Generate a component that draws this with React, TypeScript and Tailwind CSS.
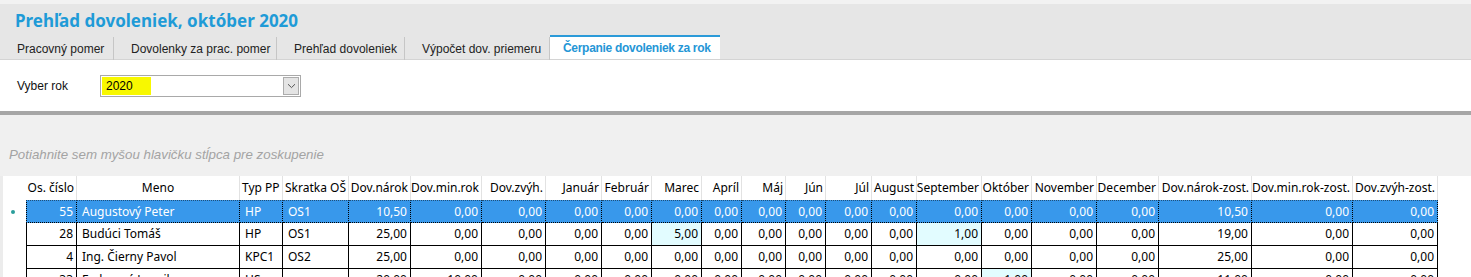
import * as React from 'react';

const cols = 'grid grid-cols-[26px_51px_163px_43px_66px_62px_71px_64px_56px_50px_50px_40px_44px_40px_46px_45px_65px_50px_65px_62px_93px_101px_85px]';

const headers: { label: string; align: 'l' | 'r' | 'c' }[] = [
  { label: 'Os. číslo', align: 'r' },
  { label: 'Meno', align: 'c' },
  { label: 'Typ PP', align: 'l' },
  { label: 'Skratka OŠ', align: 'l' },
  { label: 'Dov.nárok', align: 'r' },
  { label: 'Dov.min.rok', align: 'r' },
  { label: 'Dov.zvýh.', align: 'r' },
  { label: 'Január', align: 'r' },
  { label: 'Február', align: 'r' },
  { label: 'Marec', align: 'r' },
  { label: 'Apríl', align: 'r' },
  { label: 'Máj', align: 'r' },
  { label: 'Jún', align: 'r' },
  { label: 'Júl', align: 'r' },
  { label: 'August', align: 'r' },
  { label: 'September', align: 'r' },
  { label: 'Október', align: 'r' },
  { label: 'November', align: 'r' },
  { label: 'December', align: 'r' },
  { label: 'Dov.nárok-zost.', align: 'r' },
  { label: 'Dov.min.rok-zost.', align: 'r' },
  { label: 'Dov.zvýh-zost.', align: 'r' },
];

interface Row {
  cells: string[];
  hi?: number[]; // indexes of light cyan cells
}

const z = '0,00';

const rows: Row[] = [
  { cells: ['55', 'Augustový Peter', 'HP', 'OS1', '10,50', z, z, z, z, z, z, z, z, z, z, z, z, z, z, '10,50', z, z] },
  { cells: ['28', 'Budúci Tomáš', 'HP', 'OS1', '25,00', z, z, z, z, '5,00', z, z, z, z, z, '1,00', z, z, z, '19,00', z, z], hi: [9, 15] },
  { cells: ['4', 'Ing. Čierny Pavol', 'KPC1', 'OS2', '25,00', z, z, z, z, z, z, z, z, z, z, z, z, z, z, '25,00', z, z] },
  { cells: ['33', 'Fedorová Jarmila', 'HS', '', '20,00', '10,00', z, z, z, z, z, z, z, z, z, z, '1,00', z, z, '11,00', z, z], hi: [16] },
];

const tabs = [
  { label: 'Pracovný pomer', w: 'w-[114px]' },
  { label: 'Dovolenky za prac. pomer', w: 'w-[163px]' },
  { label: 'Prehľad dovoleniek', w: 'w-[128px]' },
  { label: 'Výpočet dov. priemeru', w: 'w-[145px]' },
];

export default function App() {
  return (
    <div className="w-[1471px] h-[277px] overflow-hidden bg-white font-['Liberation_Sans',sans-serif] text-[12px] text-black">
      <div className="h-[4px] bg-[#f2f2f2]" />
      {/* header + tabs */}
      <div className="h-[56px] bg-[#e6e6e6] border-b border-[#d4d4d4] flex flex-col">
        <div className="h-[32px] pl-[15px] pt-[5px] font-['Noto_Sans',sans-serif] font-bold text-[17px] leading-[23px] text-[#1f9bd7]">
          Prehľad dovoleniek, október 2020
        </div>
        <div className="flex h-[23px]">
          {tabs.map((t) => (
            <div key={t.label} className={`${t.w} h-full flex items-center pl-[17px] border-r border-[#c6c6c6] my-[1px] text-[#222]`}>
              {t.label}
            </div>
          ))}
          <div className="w-[170px] h-[24px] -mt-[1px] bg-white border-t-2 border-[#2b9ad8] pl-[13px] flex items-center font-bold text-[#2596d6] tracking-[-0.3px]">
            Čerpanie dovoleniek za rok
          </div>
        </div>
      </div>
      {/* filter panel */}
      <div className="h-[51px] flex items-center pl-[17px]">
        <span className="w-[83px] text-[#111]">Vyber rok</span>
        <div className="w-[201px] h-[22px] border border-[#a9a9a9] flex items-center p-[1px]">
          <span className="h-full w-[49px] bg-[#f8f800] pl-[4px] flex items-center">2020</span>
          <div className="flex-1" />
          <div className="w-[16px] h-[18px] bg-[#e4e4e4] border border-[#acacac] flex items-center justify-center">
            <svg width="9" height="6" viewBox="0 0 9 6">
              <path d="M1 1.2 L4.5 4.6 L8 1.2" fill="none" stroke="#555" strokeWidth="1" />
            </svg>
          </div>
        </div>
      </div>
      <div className="h-[4px] bg-[#a6a6a6]" />
      {/* group panel */}
      <div className="h-[61px] bg-[#f0f0f0] flex items-end pl-[9px] pb-[11px]">
        <span className="italic text-[13.3px] text-[#a3a3a3]">Potiahnite sem myšou hlavičku stĺpca pre zoskupenie</span>
      </div>
      {/* grid */}
      <div className="font-['Noto_Sans',sans-serif] text-[12px] border-l-[3px] border-[#ececec]">
        <div className={`${cols} h-[24px] -ml-[3px]`}>
          <div />
          {headers.map((h) => (
            <div
              key={h.label}
              className={`flex items-center px-[2px] border-r border-[#e2e2e2] whitespace-nowrap overflow-hidden ${h.align === 'r' ? 'justify-end' : h.align === 'c' ? 'justify-center' : 'justify-start'}`}
            >
              {h.label}
            </div>
          ))}
        </div>
        {rows.map((r, ri) => {
          const sel = ri === 0;
          return (
            <div key={ri} className={`${cols} h-[23px] -ml-[3px]`}>
              <div className="flex items-center justify-center">
                {sel && <span className="w-[4px] h-[4px] rounded-full bg-[#2a9d9b]" />}
              </div>
              {r.cells.map((c, ci) => {
                const left = ci >= 1 && ci <= 3;
                const hi = r.hi?.includes(ci);
                return (
                  <div
                    key={ci}
                    className={`flex items-center whitespace-nowrap overflow-hidden border-r border-b border-black ${ci === 0 ? 'border-l' : ''} ${sel ? 'bg-[#3898eb] text-white border-t border-t-[#1f4f7a] border-dotted' : ''} ${hi ? 'bg-[#e2fcff]' : ''} ${left ? 'justify-start pl-[5px]' : 'justify-end pr-[3px]'}`}
                  >
                    {c}
                  </div>
                );
              })}
            </div>
          );
        })}
      </div>
    </div>
  );
}
